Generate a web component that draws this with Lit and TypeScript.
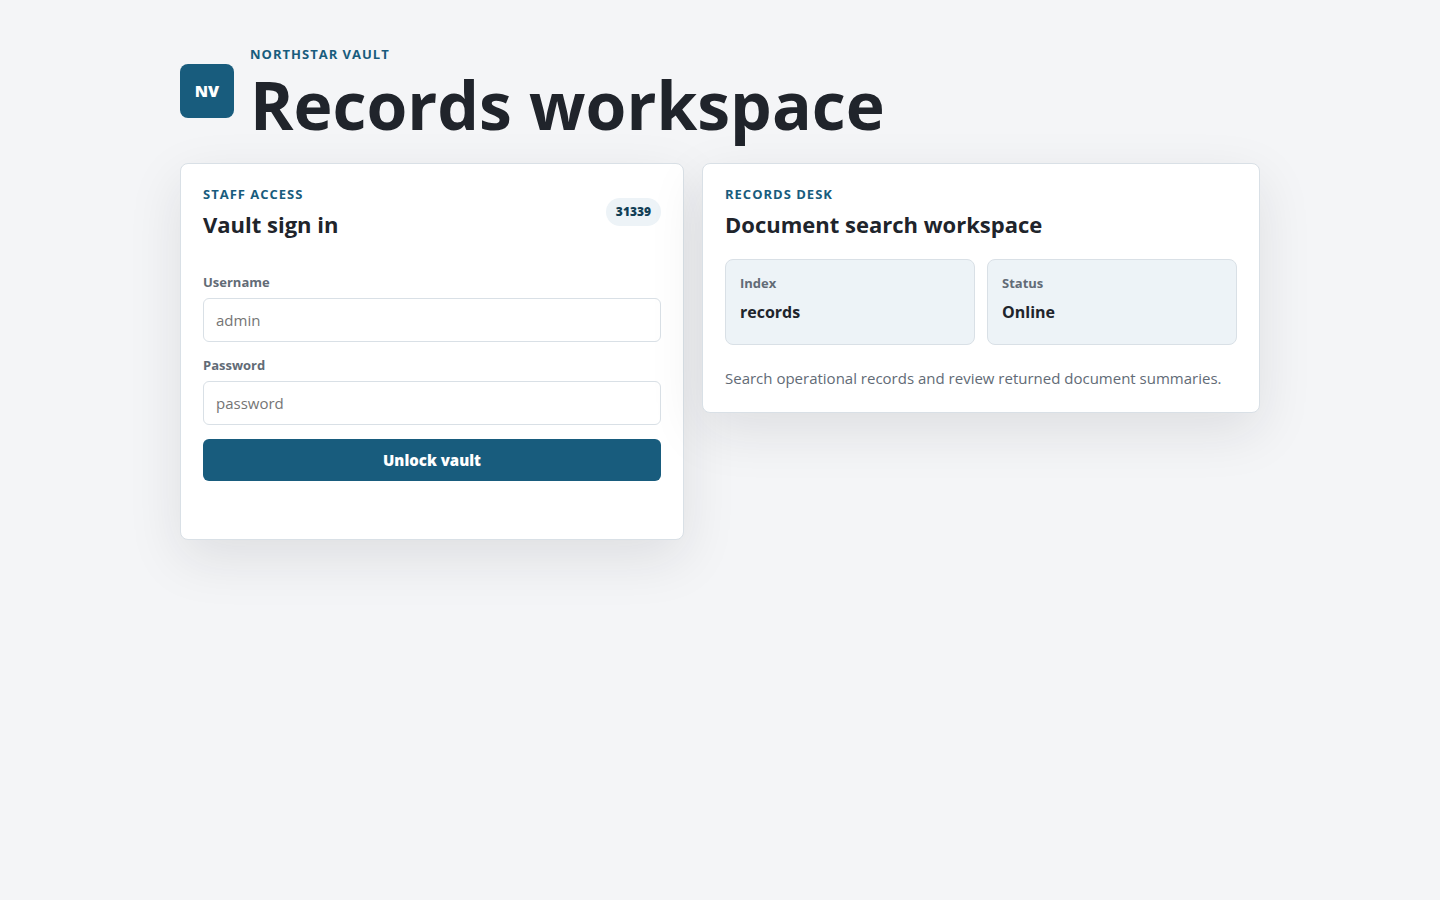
import { LitElement, html, css } from 'lit';
import { customElement, state } from 'lit/decorators.js';

interface Metric {
  label: string;
  value: string;
}

@customElement('app-root')
export class AppRoot extends LitElement {
  static styles = css`
    :host {
      display: block;
      min-height: 100vh;
      box-sizing: border-box;
      padding: 45px 24px;
      background: #f4f5f7;
      color: #20242b;
      font-family: 'Segoe UI', 'Open Sans', 'Noto Sans', sans-serif;
      font-size: 16px;
      line-height: 22px;
    }

    * {
      box-sizing: border-box;
    }

    h1,
    h2,
    p {
      margin: 0;
    }

    .shell {
      max-width: 1080px;
      margin: 0 auto;
    }

    .masthead {
      display: flex;
      align-items: center;
      gap: 16px;
      margin-bottom: 26px;
    }

    .mark {
      display: grid;
      place-items: center;
      flex: none;
      width: 54px;
      height: 54px;
      border-radius: 8px;
      background: #185c7d;
      color: #fff;
      font-weight: 800;
    }

    .eyebrow {
      margin-bottom: 8px;
      color: #185c7d;
      font-size: 13px;
      line-height: 18px;
      font-weight: 700;
      letter-spacing: 1px;
      text-transform: uppercase;
    }

    h1 {
      font-size: 66px;
      line-height: 66px;
      font-weight: 700;
    }

    .grid {
      display: grid;
      grid-template-columns: 504fr 558fr;
      align-items: start;
      gap: 18px;
    }

    .panel {
      padding: 22px;
      border: 1px solid #d9e0e6;
      border-radius: 8px;
      background: #fff;
      box-shadow: 0 18px 54px rgba(32, 34, 36, 0.1);
    }

    .panel-head {
      display: flex;
      align-items: center;
      justify-content: space-between;
      gap: 16px;
      margin-bottom: 21px;
    }

    .panel .eyebrow {
      line-height: 16px;
    }

    h2 {
      font-size: 22px;
      line-height: 28px;
      font-weight: 700;
    }

    .badge {
      padding: 5px 10px;
      border-radius: 14px;
      background: #edf3f7;
      color: #123f56;
      font-size: 12px;
      line-height: 18px;
      font-weight: 800;
    }

    form {
      display: grid;
      gap: 14px;
      padding-top: 14px;
    }

    .field {
      display: grid;
      gap: 6px;
    }

    .field label,
    .metric dt {
      color: #626b76;
      font-size: 13px;
      line-height: 19px;
      font-weight: 700;
    }

    input {
      width: 100%;
      height: 44px;
      padding: 0 12px;
      border: 1px solid #d9e0e6;
      border-radius: 6px;
      background: #fff;
      color: #20242b;
      font: inherit;
      font-size: 15px;
    }

    input::placeholder {
      color: #757575;
    }

    button {
      height: 42px;
      border: 0;
      border-radius: 6px;
      background: #185c7d;
      color: #fff;
      font: inherit;
      font-size: 15px;
      font-weight: 800;
      cursor: pointer;
    }

    .message {
      min-height: 22px;
    }

    .metrics {
      display: grid;
      grid-template-columns: 1fr 1fr;
      gap: 12px;
      margin: 0 0 21px;
    }

    .metric {
      min-height: 86px;
      padding: 14px;
      border: 1px solid #d9e0e6;
      border-radius: 8px;
      background: #edf3f7;
    }

    .metric dd {
      margin: 8px 0 0;
      font-weight: 700;
    }

    .note {
      color: #626b76;
      font-size: 15px;
      line-height: 24px;
    }

    @media (max-width: 800px) {
      .grid {
        grid-template-columns: 1fr;
      }
    }
  `;

  @state() private message = '';

  private metrics: Metric[] = [
    { label: 'Index', value: 'records' },
    { label: 'Status', value: 'Online' },
  ];

  render() {
    return html`
      <main class="shell">
        <header class="masthead">
          <div class="mark">NV</div>
          <div>
            <p class="eyebrow">Northstar Vault</p>
            <h1>Records workspace</h1>
          </div>
        </header>
        <div class="grid">
          <section class="panel">
            <div class="panel-head">
              <div>
                <p class="eyebrow">Staff access</p>
                <h2>Vault sign in</h2>
              </div>
              <span class="badge">31339</span>
            </div>
            <form @submit=${this._submit}>
              <div class="field">
                <label for="username">Username</label>
                <input id="username" name="username" placeholder="admin" autocomplete="username" />
              </div>
              <div class="field">
                <label for="password">Password</label>
                <input id="password" name="password" type="password" placeholder="password" autocomplete="current-password" />
              </div>
              <button type="submit">Unlock vault</button>
              <p class="message" role="status">${this.message}</p>
            </form>
          </section>
          <section class="panel">
            <div class="panel-head">
              <div>
                <p class="eyebrow">Records desk</p>
                <h2>Document search workspace</h2>
              </div>
            </div>
            <dl class="metrics">
              ${this.metrics.map(
                (m) => html`
                  <div class="metric">
                    <dt>${m.label}</dt>
                    <dd>${m.value}</dd>
                  </div>
                `
              )}
            </dl>
            <p class="note">Search operational records and review returned document summaries.</p>
          </section>
        </div>
      </main>
    `;
  }

  private _submit(e: Event) {
    e.preventDefault();
  }
}
